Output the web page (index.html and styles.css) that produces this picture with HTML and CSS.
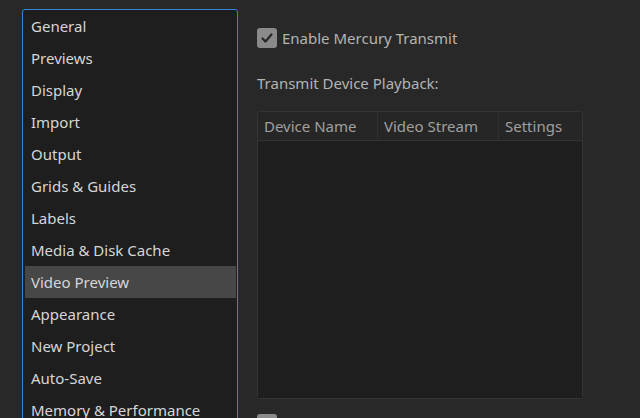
FILE: index.html
```html
<!DOCTYPE html>
<html lang="en">
<head>
    <meta charset="UTF-8">
    <title>Preferences - Video Preview</title>
    <link rel="stylesheet" href="styles.css">
</head>
<body>
    <div class="prefs">
        <ul class="sections">
            <li>General</li>
            <li>Previews</li>
            <li>Display</li>
            <li>Import</li>
            <li>Output</li>
            <li>Grids &amp; Guides</li>
            <li>Labels</li>
            <li>Media &amp; Disk Cache</li>
            <li class="selected">Video Preview</li>
            <li>Appearance</li>
            <li>New Project</li>
            <li>Auto-Save</li>
            <li>Memory &amp; Performance</li>
        </ul>

        <div class="pane">
            <label class="check">
                <span class="box on">
                    <svg width="14" height="14" viewBox="0 0 14 14"><path d="M2.5 7.5 L5.5 10.5 L11.5 3.5" fill="none" stroke="#262626" stroke-width="2.2" stroke-linecap="round" stroke-linejoin="round"/></svg>
                </span>
                Enable Mercury Transmit
            </label>

            <div class="caption">Transmit Device Playback:</div>

            <div class="devices">
                <div class="head">
                    <div class="col name">Device Name</div>
                    <div class="col stream">Video Stream</div>
                    <div class="col settings">Settings</div>
                </div>
                <div class="rows"></div>
            </div>

            <label class="check bottom">
                <span class="box"></span>
                Disable video output when in the background
            </label>
        </div>
    </div>
</body>
</html>
```

FILE: styles.css
```css
body {
    margin: 0;
    background-color: #282828;
    font-family: "Noto Sans", "Open Sans", sans-serif;
    font-size: 15px;
    color: #b4b4b4;
    overflow: hidden;
    height: 418px;
}

.prefs {
    display: flex;
    padding: 9px 0 0 22px;
}

.sections {
    list-style: none;
    margin: 0;
    padding: 0 1px 40px 2px;
    width: 211px;
    border: 1px solid #3a82dc;
    border-radius: 3px;
    background-color: #1e1e1e;
    color: #d6d6d6;
    flex-shrink: 0;
}

.sections li {
    height: 32px;
    line-height: 32px;
    padding-left: 6px;
    white-space: nowrap;
}

.sections .selected {
    background-color: #474747;
}

.pane {
    margin-left: 19px;
    padding-top: 18px;
    width: 326px;
}

.check {
    display: flex;
    align-items: center;
    gap: 5px;
    height: 22px;
    white-space: nowrap;
}

.check.bottom {
    padding-top: 8px;
}

.box {
    width: 20px;
    height: 20px;
    border-radius: 3px;
    background-color: #8a8a8a;
    display: flex;
    align-items: center;
    justify-content: center;
    flex-shrink: 0;
}

.caption {
    margin-top: 23px;
    line-height: 22px;
}

.devices {
    margin-top: 17px;
    height: 286px;
    border: 1px solid #343434;
    border-radius: 3px;
    display: flex;
    flex-direction: column;
    margin-bottom: 6px;
}

.head {
    display: flex;
    height: 28px;
    background-color: #262626;
    color: #a0a0a0;
    border-bottom: 1px solid #333333;
}

.col {
    line-height: 28px;
    padding-left: 6px;
    border-right: 1px solid #303030;
    white-space: nowrap;
}

.name { width: 113px; }
.stream { width: 114px; }
.settings { flex: 1; border-right: none; }

.rows {
    flex: 1;
    background-color: #1e1e1e;
}
```
